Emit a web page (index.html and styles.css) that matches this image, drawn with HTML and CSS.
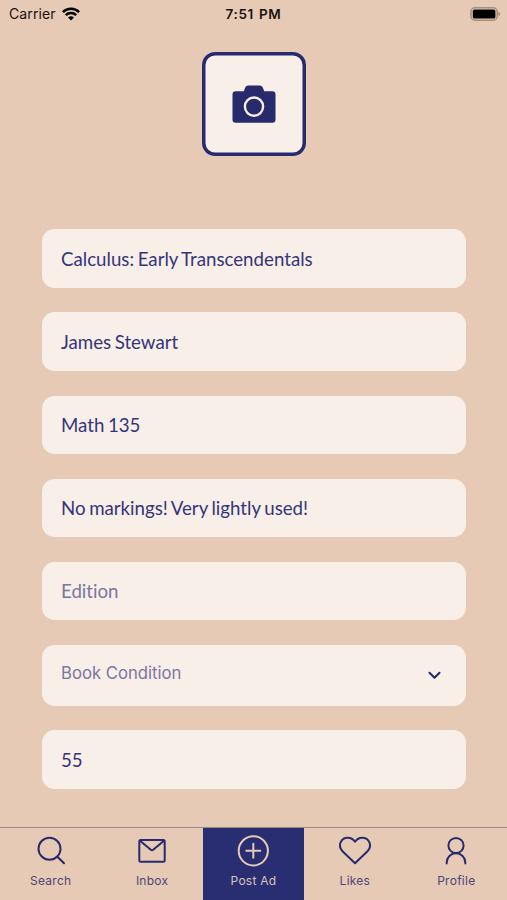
FILE: index.html
```html
<!DOCTYPE html>
<html lang="en">
<head>
<meta charset="utf-8">
<title>Post Ad</title>
<link rel="stylesheet" href="styles.css">
</head>
<body>
<div class="screen">
  <header class="status">
    <div class="carrier"><span class="carrier-name">Carrier</span>
      <svg class="wifi" width="18" height="14" viewBox="0 0 18 14" fill="none" stroke="#000" stroke-width="2.5"><path d="M.9 5.1a11.6 11.6 0 0 1 16.2 0M3.8 8.2a7.4 7.4 0 0 1 10.4 0"/><path d="M9 13.6 6 10.6a4.3 4.3 0 0 1 6 0z" fill="#000" stroke="none"/></svg>
    </div>
    <div class="time">7:51 PM</div>
    <div class="power">
      <svg width="31" height="14" viewBox="0 0 31 14"><rect x="1" y=".8" width="26.2" height="12.4" rx="4" fill="none" stroke="#a48f80" stroke-width="1.6"/><rect x="2.8" y="2.4" width="22.6" height="9.2" rx="1.6"/><path d="M28.4 4.8q2 .8 2 2.2t-2 2.2z" fill="#a48f80"/></svg>
    </div>
  </header>
  <main class="form">
    <button class="photo" aria-label="Add photo">
      <svg width="44" height="38" viewBox="0 0 44 38"><path d="M3.7 6.2h8.1l1.3-3.4Q14.1.5 16.3.5h11.4q2.2 0 3.2 2.3l1.3 3.4h8.1q3.2 0 3.2 3.2v25.1q0 3.2-3.2 3.2H3.7Q.5 37.700.5 34.500V9.400Q.5 6.200 3.700 6.200z" fill="#272a6c"/><circle cx="22" cy="21.600" r="9.100" fill="none" stroke="#f7efe8" stroke-width="2.400"/></svg>
    </button>
    <div class="field">Calculus: Early Transcendentals</div>
    <div class="field">James Stewart</div>
    <div class="field">Math 135</div>
    <div class="field">No markings! Very lightly used!</div>
    <div class="field placeholder">Edition</div>
    <div class="field placeholder select"><span>Book Condition</span>
      <svg width="13" height="9" viewBox="0 0 13 9" fill="none" stroke="#272a6c" stroke-width="2.1" stroke-linecap="round" stroke-linejoin="round"><path d="m1.500 1.800 5 4.900 5-4.900"/></svg>
    </div>
    <div class="field">55</div>
  </main>
  <nav class="tabs">
    <a class="tab"><svg class="icon" viewBox="0 0 32 32"><circle cx="14.5" cy="13.8" r="11"/><path d="m22.4 21.7 6.6 6.6"/></svg><span>Search</span></a>
    <a class="tab"><svg class="icon" viewBox="0 0 32 32"><rect x="3.3" y="5" width="25.4" height="21.8" rx="1.5"/><path d="m4 5.700 10.800 9.100q1.200 1 2.400 0L28 5.700"/></svg><span>Inbox</span></a>
    <a class="tab active"><svg class="icon" viewBox="0 0 32 32"><circle cx="16.300" cy="15.800" r="14.600"/><path d="M16.300 8.800v14M9.300 15.800h14"/></svg><span>Post Ad</span></a>
    <a class="tab"><svg class="icon" viewBox="0 0 32 32"><path d="M16 28.200 3.500 16.300C-1.800 10.500 2 2.800 8.800 2.800c3.200 0 5.400 1.400 7.200 4 1.800-2.600 4-4 7.200-4 6.800 0 10.600 7.700 5.300 13.500z"/></svg><span>Likes</span></a>
    <a class="tab"><svg class="icon" viewBox="0 0 32 32"><circle cx="16" cy="10.5" r="7.6"/><path d="M6.700 28.500v-1a9.300 9.300 0 0 1 18.600 0v1"/></svg><span>Profile</span></a>
  </nav>
</div>
</body>
</html>
```
FILE: styles.css
```css
* { box-sizing: border-box; }
body { margin: 0; background: #e6cab5; }
.screen {
  height: 900px;
  display: flex;
  flex-direction: column;
  font-family: Inter, sans-serif;
  color: #272a6c;
}
.status {
  height: 27px;
  padding: 0 6px 0 9px;
  display: grid;
  grid-template-columns: 1fr auto 1fr;
  align-items: center;
  color: #17120f;
}
.carrier { display: flex; align-items: center; gap: 6px; font-size: 14px; letter-spacing: .1px; }
.time {
  margin-right: 3px;
  font-size: 13.5px;
  font-weight: 600;
  letter-spacing: .6px;
  word-spacing: 1.2px;
}
.power { display: flex; justify-content: flex-end; }
.form {
  flex: 1;
  padding: 25px 41.5px 0 42.3px;
  display: flex;
  flex-direction: column;
  gap: 24.4px;
}
.photo {
  width: 104px;
  height: 104px;
  margin: 0 0 49px;
  padding: 0;
  align-self: center;
  display: flex;
  align-items: center;
  justify-content: center;
  border: 0;
  border-radius: 13px;
  background: #f7efe8;
  box-shadow: inset 0 0 0 3.5px #272a6c;
}
.field {
  height: 58.7px;
  flex: none;
  padding: 0 18.7px;
  display: flex;
  align-items: center;
  border-radius: 12.5px;
  background: #f7efe8;
  color: #35357a;
  font: 18.7px Lato, sans-serif;
  font-variant-ligatures: none;
  word-spacing: -1.2px;
}
.placeholder { color: #7d75a2; }
.select {
  height: 61.3px;
  justify-content: space-between;
  padding: 0 24.5px 4px 18.7px;
  font: 16.7px Inter, sans-serif;
  word-spacing: 0;
}
.select svg { position: relative; top: 2px; }
.tabs {
  height: 73px;
  border-top: 1px solid #97898a;
  display: grid;
  grid-template-columns: repeat(5, 1fr);
}
.tab {
  padding-top: 7px;
  display: flex;
  flex-direction: column;
  align-items: center;
  gap: 6px;
  color: #4c4679;
  font-size: 12px;
  line-height: 15px;
  letter-spacing: .25px;
}
.icon {
  width: 32px;
  height: 32px;
  fill: none;
  stroke: #272a6c;
  stroke-width: 2;
  stroke-linecap: round;
  stroke-linejoin: round;
}
.active { background: #292d72; color: #d9c3ba; }
.active .icon { stroke: #e6cab5; }
```
